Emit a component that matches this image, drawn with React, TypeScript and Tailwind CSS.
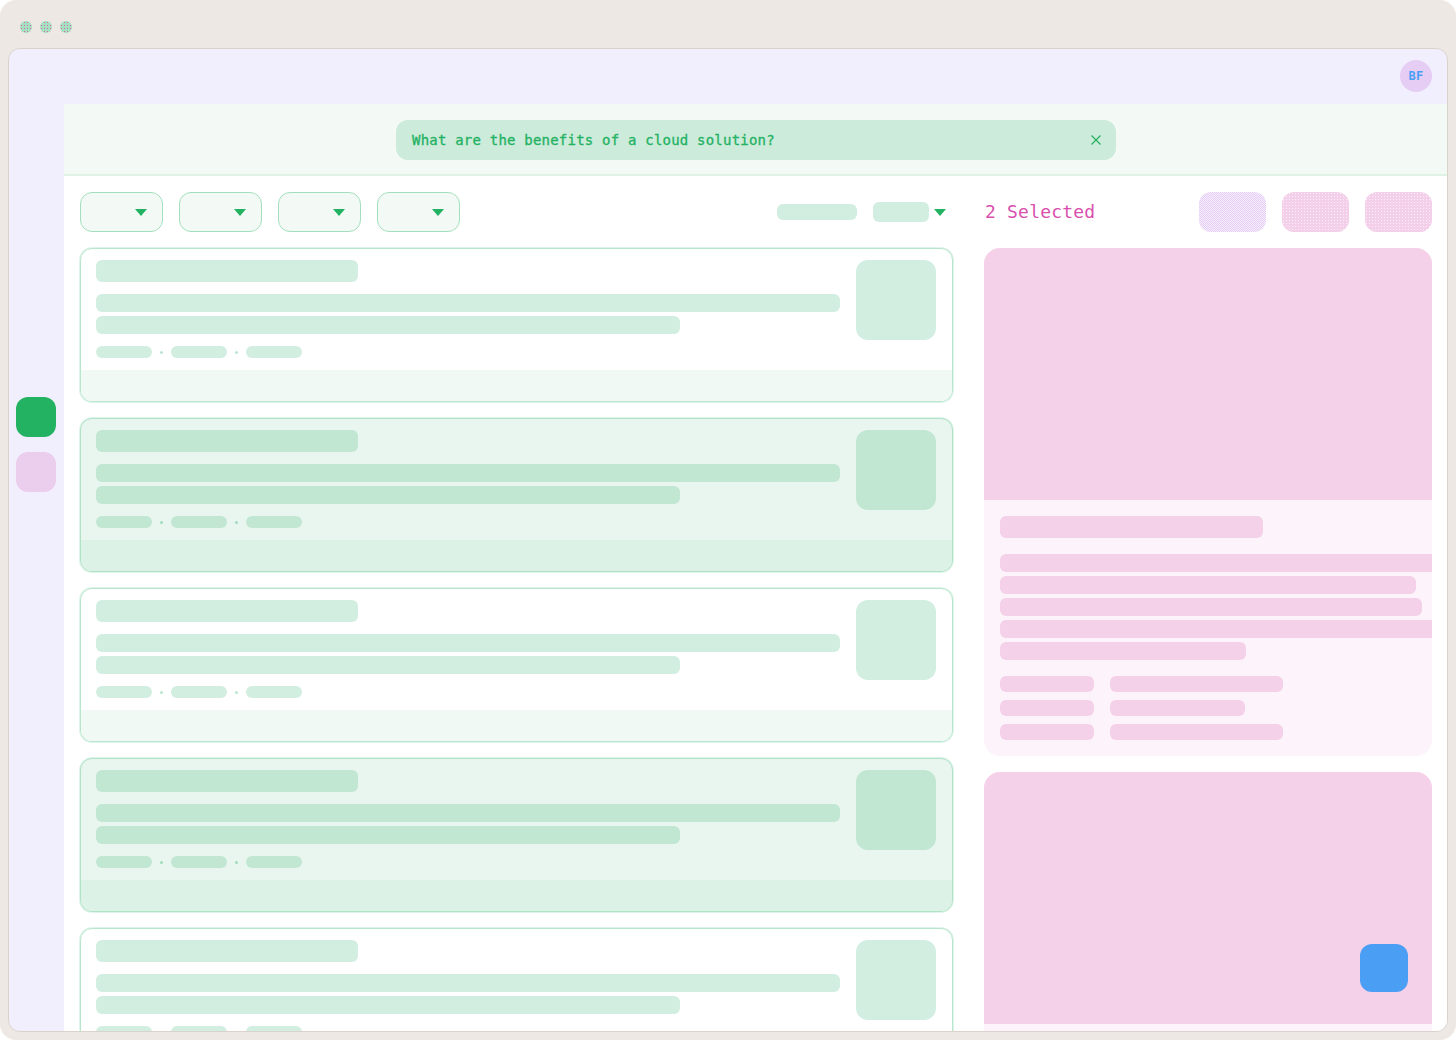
import React from "react";

function Caret() {
  return (
    <svg width="12" height="7" viewBox="0 0 12 7" className="block shrink-0">
      <path d="M0 0H12L6 7Z" fill="#22b262" />
    </svg>
  );
}

function Filter() {
  return (
    <div className="flex h-10 w-[83px] items-center justify-end rounded-xl border border-[#a3dfbd] bg-[#f3f9f5] pr-[15px]">
      <Caret />
    </div>
  );
}

function Dot() {
  return <div className="h-3 w-3 rounded-full bg-[#a5e0c0] bg-[radial-gradient(#d664a8_0.6px,transparent_0.8px)] bg-[length:3px_3px]" />;
}

function Card({ selected = false }: { selected?: boolean }) {
  const bar = selected ? "bg-[#c1e7d3]" : "bg-[#d2eee0]";
  const dot = selected ? "bg-[#a5dcbf]" : "bg-[#bde6d0]";
  return (
    <div
      className={
        "flex h-[154px] shrink-0 flex-col overflow-hidden rounded-xl border shadow-[0_0_0_1px_#e0f4e9] " +
        (selected ? "border-[#b0e2c6] bg-[#e9f5ef]" : "border-[#b7e6cc] bg-white")
      }
    >
      <div className="flex h-[121px] shrink-0 gap-4 pl-[15px] pr-4 pt-[11px]">
        <div className="min-w-0 flex-1">
          <div className={"h-[22px] w-[262px] rounded-md " + bar} />
          <div className={"mt-3 h-[18px] rounded-md " + bar} />
          <div className={"mt-1 h-[18px] w-[584px] rounded-md " + bar} />
          <div className="mt-3 flex items-center gap-2">
            <div className={"h-3 w-14 rounded-md " + bar} />
            <div className={"h-[3px] w-[3px] rounded-full " + dot} />
            <div className={"h-3 w-14 rounded-md " + bar} />
            <div className={"h-[3px] w-[3px] rounded-full " + dot} />
            <div className={"h-3 w-14 rounded-md " + bar} />
          </div>
        </div>
        <div className={"h-20 w-20 shrink-0 rounded-xl " + bar} />
      </div>
      <div className={"flex-1 " + (selected ? "bg-[#ddf2e6]" : "bg-[#f1f9f5]")} />
    </div>
  );
}

function Panel({ children }: { children?: React.ReactNode }) {
  return (
    <div className="relative shrink-0 overflow-hidden rounded-2xl bg-[#fdf3fa]">
      <div className="h-[252px] bg-[#f4d0e9]" />
      {children}
    </div>
  );
}

function Row({ width }: { width: string }) {
  return (
    <div className="flex gap-4">
      <div className="h-4 w-[94px] rounded-md bg-[#f4d0e9]" />
      <div className={"h-4 rounded-md bg-[#f4d0e9] " + width} />
    </div>
  );
}

export default function App() {
  return (
    <div className="h-[1040px] w-[1456px] overflow-hidden rounded-2xl bg-[#ede8e3] font-['Liberation_Sans',sans-serif]">
      <div className="flex h-12 items-center gap-2 pl-5 pt-[6px]">
        <Dot />
        <Dot />
        <Dot />
      </div>
      <div className="mx-2 flex h-[984px] flex-col overflow-hidden rounded-xl border border-[#d9d3cb] bg-[#f1eefe]">
        <div className="flex h-[55px] shrink-0 items-start justify-end pr-[15px] pt-[11px]">
          <div className="flex h-8 w-8 items-center justify-center rounded-full bg-[#e6cdf3] font-['DejaVu_Sans_Mono',monospace] text-xs font-bold tracking-[0.4px] text-[#4a9ff5]">
            BF
          </div>
        </div>
        <div className="flex min-h-0 flex-1">
          <div className="flex w-[55px] shrink-0 flex-col items-end pr-2 pt-[293px]">
            <div className="h-10 w-10 rounded-xl bg-[#22b262]" />
            <div className="mt-[15px] h-10 w-10 rounded-xl bg-[#ebcdee]" />
          </div>
          <div className="flex min-w-0 flex-1 flex-col bg-white">
            <div className="flex h-[72px] shrink-0 items-start justify-center border-b-2 border-[#def2e6] bg-[#f3f9f5] pl-px pt-4">
              <div className="flex h-10 w-[720px] items-center justify-between rounded-xl bg-[#cdebdb] pl-4 pr-[14px]">
                <span className="font-['DejaVu_Sans_Mono',monospace] text-[14px] tracking-[0.21px] text-[#22b262] [-webkit-text-stroke:0.3px_#22b262]">
                  What are the benefits of a cloud solution?
                </span>
                <svg width="12" height="12" viewBox="0 0 12 12" className="block" fill="none" stroke="#22b262" strokeWidth="1.2">
                  <path d="M1.5 1.5L10.5 10.5M10.5 1.5L1.5 10.5" />
                </svg>
              </div>
            </div>
            <div className="flex min-h-0 flex-1 gap-[31px] pl-4 pr-[15px] pt-4">
              <div className="-mx-px flex w-[875px] shrink-0 flex-col gap-4 overflow-hidden px-px">
                <div className="flex h-10 shrink-0 items-center pr-[7px]">
                  <div className="flex gap-4">
                    <Filter />
                    <Filter />
                    <Filter />
                    <Filter />
                  </div>
                  <div className="ml-auto h-4 w-20 rounded-md bg-[#d2eee0]" />
                  <div className="ml-4 h-5 w-14 rounded-md bg-[#d2eee0]" />
                  <div className="ml-[5px]">
                    <Caret />
                  </div>
                </div>
                <Card />
                <Card selected />
                <Card />
                <Card selected />
                <Card />
              </div>
              <div className="flex min-w-0 flex-1 flex-col gap-4 overflow-hidden">
                <div className="flex h-10 shrink-0 items-center">
                  <span className="-mt-[2px] pl-px font-['DejaVu_Sans_Mono',monospace] text-[18px] tracking-[0.2px] text-[#d94fae]">
                    2 Selected
                  </span>
                  <div className="ml-auto flex gap-4">
                    <div className="h-10 w-[67px] rounded-xl bg-[#e6cdf3] bg-[repeating-conic-gradient(#e6cdf3_0_25%,#f6eefc_0_50%)] bg-[length:2px_2px]" />
                    <div className="h-10 w-[67px] rounded-xl bg-[#f3cfe9] bg-[radial-gradient(#fbeef8_0.6px,transparent_0.8px)] bg-[length:3px_3px]" />
                    <div className="h-10 w-[67px] rounded-xl bg-[#f3cfe9] bg-[radial-gradient(#fbeef8_0.6px,transparent_0.8px)] bg-[length:3px_3px]" />
                  </div>
                </div>
                <Panel>
                  <div className="overflow-hidden px-4 pb-4 pt-4">
                    <div className="h-[22px] w-[263px] rounded-md bg-[#f4d0e9]" />
                    <div className="mt-4 flex flex-col gap-1">
                      <div className="h-[18px] w-[440px] rounded-md bg-[#f4d0e9]" />
                      <div className="h-[18px] w-[416px] rounded-md bg-[#f4d0e9]" />
                      <div className="h-[18px] w-[422px] rounded-md bg-[#f4d0e9]" />
                      <div className="h-[18px] w-[440px] rounded-md bg-[#f4d0e9]" />
                      <div className="h-[18px] w-[246px] rounded-md bg-[#f4d0e9]" />
                    </div>
                    <div className="mt-4 flex flex-col gap-2">
                      <Row width="w-[173px]" />
                      <Row width="w-[135px]" />
                      <Row width="w-[173px]" />
                    </div>
                  </div>
                </Panel>
                <Panel>
                  <div className="h-8" />
                  <div className="absolute left-[376px] top-[172px] h-12 w-12 rounded-xl bg-[#4a9ff5]" />
                </Panel>
              </div>
            </div>
          </div>
        </div>
      </div>
    </div>
  );
}
